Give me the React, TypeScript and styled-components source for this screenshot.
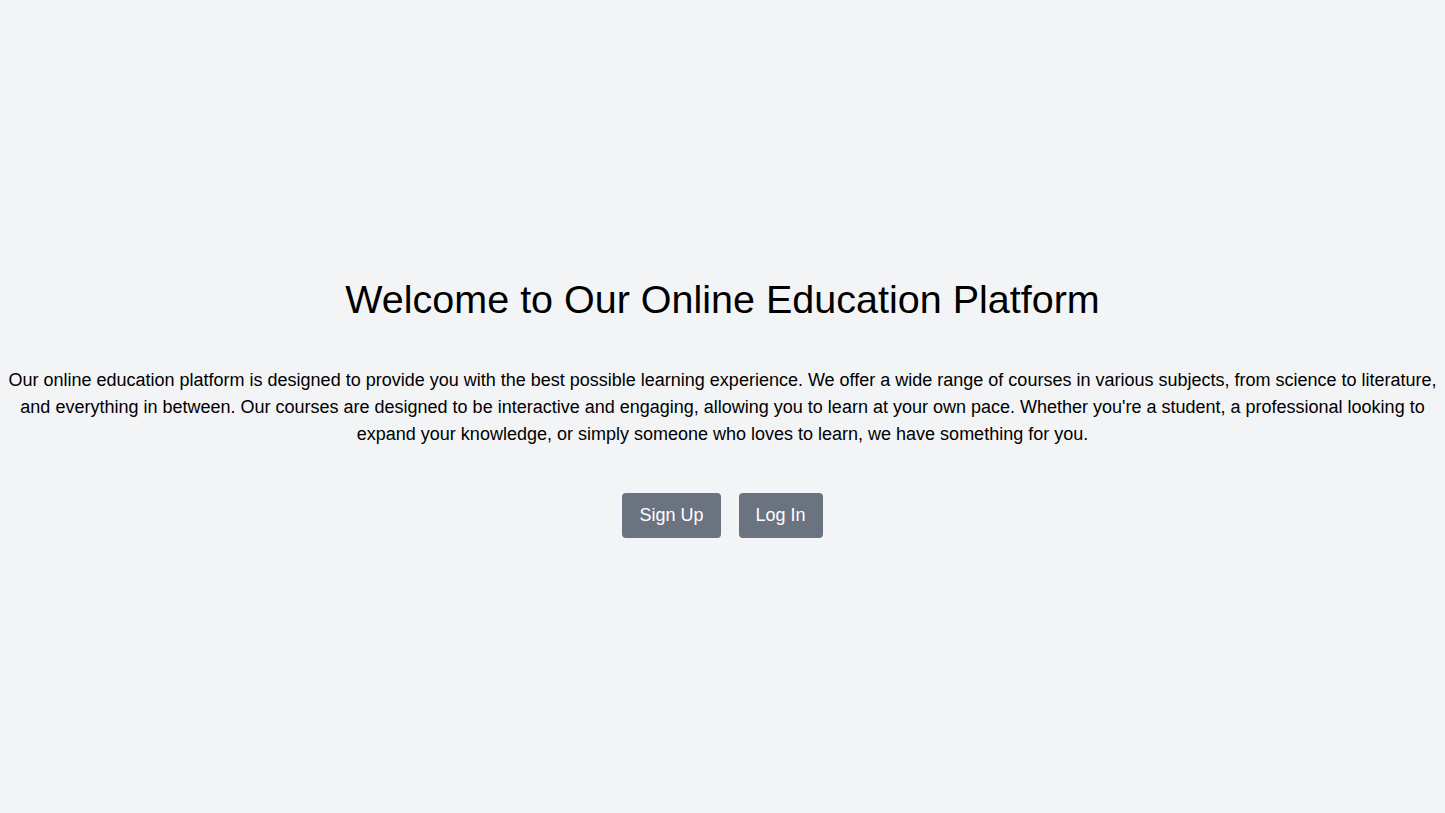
import React from "react";
import styled, { createGlobalStyle } from "styled-components";

const Global = createGlobalStyle`
  html, body { margin: 0; padding: 0; }
  body {
    background: #f3f4f6;
    font-family: "Liberation Sans", Arial, sans-serif;
    color: #000;
  }
`;

const Page = styled.main`
  min-height: 100vh;
  display: flex;
  flex-direction: column;
  align-items: center;
  justify-content: center;
  text-align: center;
  padding: 0 8px;
  box-sizing: border-box;
`;

const Title = styled.h1`
  margin: 0 0 44px;
  font-size: 39.5px;
  font-weight: 400;
  line-height: 48px;
`;

const Lead = styled.p`
  margin: 0 0 45px;
  font-size: 18px;
  line-height: 27px;
`;

const Actions = styled.div`
  display: flex;
  gap: 18px;
`;

const Button = styled.button`
  font-family: inherit;
  font-size: 18px;
  line-height: 27px;
  color: #fff;
  background: #6b7280;
  border: none;
  border-radius: 4px;
  padding: 9px 17px;
  cursor: pointer;
`;

export default function App() {
  return (
    <>
      <Global />
      <Page>
        <Title>Welcome to Our Online Education Platform</Title>
        <Lead>
          Our online education platform is designed to provide you with the best possible learning
          experience. We offer a wide range of courses in various subjects, from science to literature,
          and everything in between. Our courses are designed to be interactive and engaging, allowing
          you to learn at your own pace. Whether you're a student, a professional looking to expand your
          knowledge, or simply someone who loves to learn, we have something for you.
        </Lead>
        <Actions>
          <Button>Sign Up</Button>
          <Button>Log In</Button>
        </Actions>
      </Page>
    </>
  );
}
